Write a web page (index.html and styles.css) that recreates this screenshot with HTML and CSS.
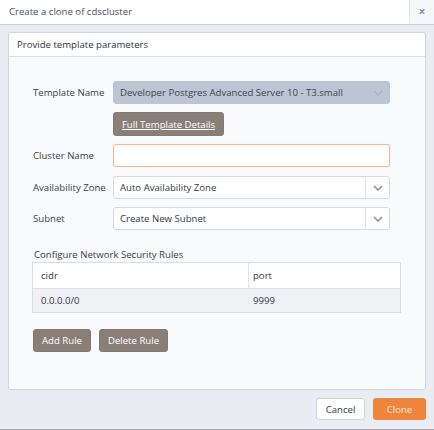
FILE: index.html
```html
<!DOCTYPE html>
<html>
<head>
<meta charset="utf-8">
<link rel="stylesheet" href="styles.css">
</head>
<body>
<div class="dialog">
  <div class="titlebar">
    <div class="title">Create a clone of cdscluster</div>
    <div class="close">&#215;</div>
  </div>
  <div class="content">
    <div class="panel">
      <div class="panel-head">Provide template parameters</div>
      <div class="panel-body">
        <div class="row">
          <div class="label">Template Name</div>
          <div class="select disabled">
            <span class="val">Developer Postgres Advanced Server 10 - T3.small</span>
            <span class="arrow noline"><svg width="10" height="6" viewBox="0 0 10 6"><path d="M1 1 L5 5 L9 1" fill="none" stroke="#a9b3c2" stroke-width="1.5"/></svg></span>
          </div>
        </div>
        <div class="row r-btn">
          <div class="label"></div>
          <div><button class="btn dark link">Full Template Details</button></div>
        </div>
        <div class="row r-input">
          <div class="label">Cluster Name</div>
          <div class="input"></div>
        </div>
        <div class="row r-az">
          <div class="label">Availability Zone</div>
          <div class="select">
            <span class="val">Auto Availability Zone</span>
            <span class="arrow"><svg width="10" height="6" viewBox="0 0 10 6"><path d="M1 1 L5 5 L9 1" fill="none" stroke="#8a919c" stroke-width="1.5"/></svg></span>
          </div>
        </div>
        <div class="row r-sub">
          <div class="label">Subnet</div>
          <div class="select">
            <span class="val">Create New Subnet</span>
            <span class="arrow"><svg width="10" height="6" viewBox="0 0 10 6"><path d="M1 1 L5 5 L9 1" fill="none" stroke="#8a919c" stroke-width="1.5"/></svg></span>
          </div>
        </div>
        <div class="rules-label">Configure Network Security Rules</div>
        <div class="table">
          <div class="tr th"><div class="c1">cidr</div><div class="c2">port</div></div>
          <div class="tr td"><div class="c1">0.0.0.0/0</div><div class="c2">9999</div></div>
        </div>
        <div class="actions">
          <button class="btn dark">Add Rule</button>
          <button class="btn dark">Delete Rule</button>
        </div>
      </div>
    </div>
    <div class="footer">
      <button class="btn light">Cancel</button>
      <button class="btn orange">Clone</button>
    </div>
  </div>
</div>
</body>
</html>
```
FILE: styles.css
```css
html, body {
  margin: 0;
  padding: 0;
}
body {
  width: 434px;
  height: 430px;
  background: #e9ecf3;
  font-family: "Open Sans", "Liberation Sans", sans-serif;
  font-size: 9.6px;
  color: #333a44;
  overflow: hidden;
}
.dialog {
  height: 429px;
  border-bottom: 1px solid #a7adb8;
  display: flex;
  flex-direction: column;
}
.titlebar {
  height: 24px;
  background: #ffffff;
  border-bottom: 1px solid #c8ced9;
  display: flex;
  align-items: stretch;
}
.title {
  flex: 1;
  padding-left: 9px;
  line-height: 24px;
  color: #4a5260;
}
.close {
  width: 24px;
  border-left: 1px solid #dfe3ea;
  border-bottom-left-radius: 3px;
  background: #f5f7fa;
  color: #8a919c;
  text-align: center;
  line-height: 23px;
  font-size: 12px;
  font-weight: bold;
}
.content {
  padding: 7px 8px 0 8px;
}
.panel {
  border: 1px solid #d2d6de;
  border-radius: 3px;
  background: #f9fafc;
  height: 358px;
  box-sizing: border-box;
}
.panel-head {
  height: 23px;
  line-height: 23px;
  background: #ffffff;
  border-bottom: 1px solid #dcdfe6;
  border-radius: 3px 3px 0 0;
  padding-left: 8px;
  color: #2f3540;
}
.panel-body {
  padding: 24px 34px 0 23px;
}
.row {
  display: grid;
  grid-template-columns: 81px 277px;
  align-items: center;
  margin-bottom: 8px;
}
.row.r-btn { margin-bottom: 8px; }
.row.r-input { margin-bottom: 9px; }
.row.r-az { margin-bottom: 8px; }
.row.r-sub { margin-bottom: 0; }
.label {
  padding-left: 1px;
  color: #3a414c;
  white-space: nowrap;
}
.select {
  height: 23px;
  box-sizing: border-box;
  border: 1px solid #d5d9e0;
  border-radius: 3px;
  background: #ffffff;
  display: flex;
  align-items: stretch;
}
.select .val {
  flex: 1;
  padding-left: 6px;
  line-height: 21px;
  white-space: nowrap;
}
.select .arrow {
  width: 23px;
  border-left: 1px solid #dfe2e8;
  display: flex;
  align-items: center;
  justify-content: center;
}
.select .arrow.noline { border-left: none; }
.select.disabled {
  background: #bcc5d3;
  border-color: #bcc5d3;
  color: #3d4552;
}
.input {
  height: 23px;
  box-sizing: border-box;
  border: 1px solid #f2b88f;
  border-radius: 3px;
  background: #ffffff;
  box-shadow: 0 0 1px #f7d2b6;
}
.btn {
  font-family: "Open Sans", "Liberation Sans", sans-serif;
  font-size: 9.6px;
  border-radius: 3px;
  padding: 0;
  height: 22px;
  box-sizing: border-box;
  border: none;
  white-space: nowrap;
  text-align: center;
  cursor: pointer;
}
.btn.dark {
  background: #897f77;
  color: #ffffff;
  border: 1px solid #837970;
}
.btn.link {
  height: 24px;
  width: 111px;
  text-decoration: underline;
  display: block;
}
.rules-label {
  margin-top: 18px;
  padding-left: 2px;
  line-height: 13px;
  color: #3a414c;
}
.table {
  margin-top: 1px;
  width: 369px;
  border: 1px solid #d8dce3;
  box-sizing: border-box;
}
.tr {
  display: grid;
  grid-template-columns: 216px 1fr;
}
.tr.th {
  background: #ffffff;
  height: 25px;
  line-height: 25px;
  border-bottom: 1px solid #dfe2e8;
  color: #333a44;
}
.tr.th .c1 { border-right: 1px solid #dfe2e8; }
.tr.td {
  background: #eff1f5;
  height: 23px;
  line-height: 23px;
}
.c1 { padding-left: 8px; }
.c2 { padding-left: 4px; }
.actions {
  margin-top: 16px;
  margin-left: 1px;
  display: flex;
  gap: 8px;
}
.actions .btn { height: 23px; }
.actions .btn:first-child { width: 58px; }
.actions .btn:last-child { width: 69px; }
.footer {
  display: flex;
  justify-content: flex-end;
  gap: 8px;
  margin-top: 8px;
}
.btn.light {
  background: #ffffff;
  border: 1px solid #cfd4dc;
  color: #333a44;
  width: 49px;
}
.btn.orange {
  background: #ef843b;
  color: #fde8d8;
  width: 53px;
}
```
